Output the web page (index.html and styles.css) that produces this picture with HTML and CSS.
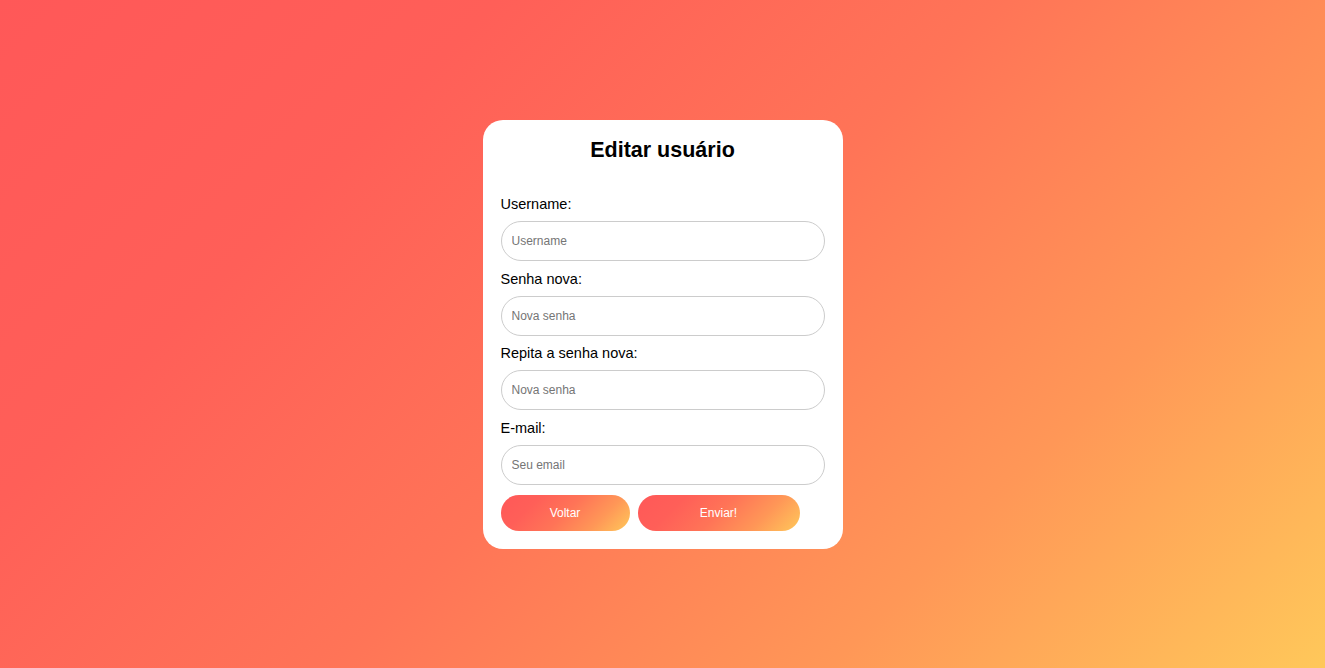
FILE: index.html
```html
<!DOCTYPE html>
<html lang="pt-BR">
<head>
<meta charset="utf-8">
<title>Editar usuário</title>
<link rel="stylesheet" href="styles.css">
</head>
<body>
<main class="page">
  <form class="card">
    <h2 class="title">Editar usuário</h2>
    <label class="label" for="u">Username:</label>
    <input class="field" id="u" type="text" placeholder="Username">
    <label class="label" for="p1">Senha nova:</label>
    <input class="field" id="p1" type="password" placeholder="Nova senha">
    <label class="label" for="p2">Repita a senha nova:</label>
    <input class="field" id="p2" type="password" placeholder="Nova senha">
    <label class="label" for="e">E-mail:</label>
    <input class="field" id="e" type="email" placeholder="Seu email">
    <div class="actions">
      <button type="button" class="btn btn-back">Voltar</button>
      <button type="submit" class="btn btn-send">Enviar!</button>
    </div>
  </form>
</main>
</body>
</html>
```
FILE: styles.css
```css
* { box-sizing: border-box; }
html, body { margin: 0; height: 100%; }
body {
  font-family: "Liberation Sans", Arial, sans-serif;
  background: linear-gradient(135deg, #ff5858 0%, #ff5f58 25%, #ff7457 50%, #ff9757 75%, #ffc85a 100%);
}
.page {
  height: 668px;
  display: flex;
  align-items: flex-start;
  justify-content: center;
  padding-top: 120px;
}
.card {
  width: 360px;
  background: #fff;
  border-radius: 20px;
  padding: 18px;
  display: flex;
  flex-direction: column;
}
.title {
  margin: 0 0 33px;
  font-size: 21.5px;
  line-height: 25px;
  font-weight: bold;
  text-align: center;
  color: #000;
}
.label {
  display: block;
  font-size: 14.5px;
  line-height: 17px;
  color: #000;
  margin-bottom: 8px;
}
.field {
  width: 324px;
  height: 40px;
  border: 1px solid #ccc;
  border-radius: 20px;
  padding: 0 10px;
  font-family: "Liberation Sans", Arial, sans-serif;
  font-size: 12px;
  margin: 0 0 9.67px;
  outline: none;
}
.field::placeholder { color: #757575; }
.actions {
  display: flex;
  gap: 8px;
}
.btn {
  height: 36px;
  border: none;
  border-radius: 18px;
  color: #fff;
  font-family: "Liberation Sans", Arial, sans-serif;
  font-size: 12px;
  background: linear-gradient(135deg, #ff5858 0%, #ff5f58 25%, #ff7457 50%, #ff9757 75%, #ffc85a 100%);
  cursor: pointer;
  padding: 0;
}
.btn-back { width: 129px; }
.btn-send { width: 162px; }
```
